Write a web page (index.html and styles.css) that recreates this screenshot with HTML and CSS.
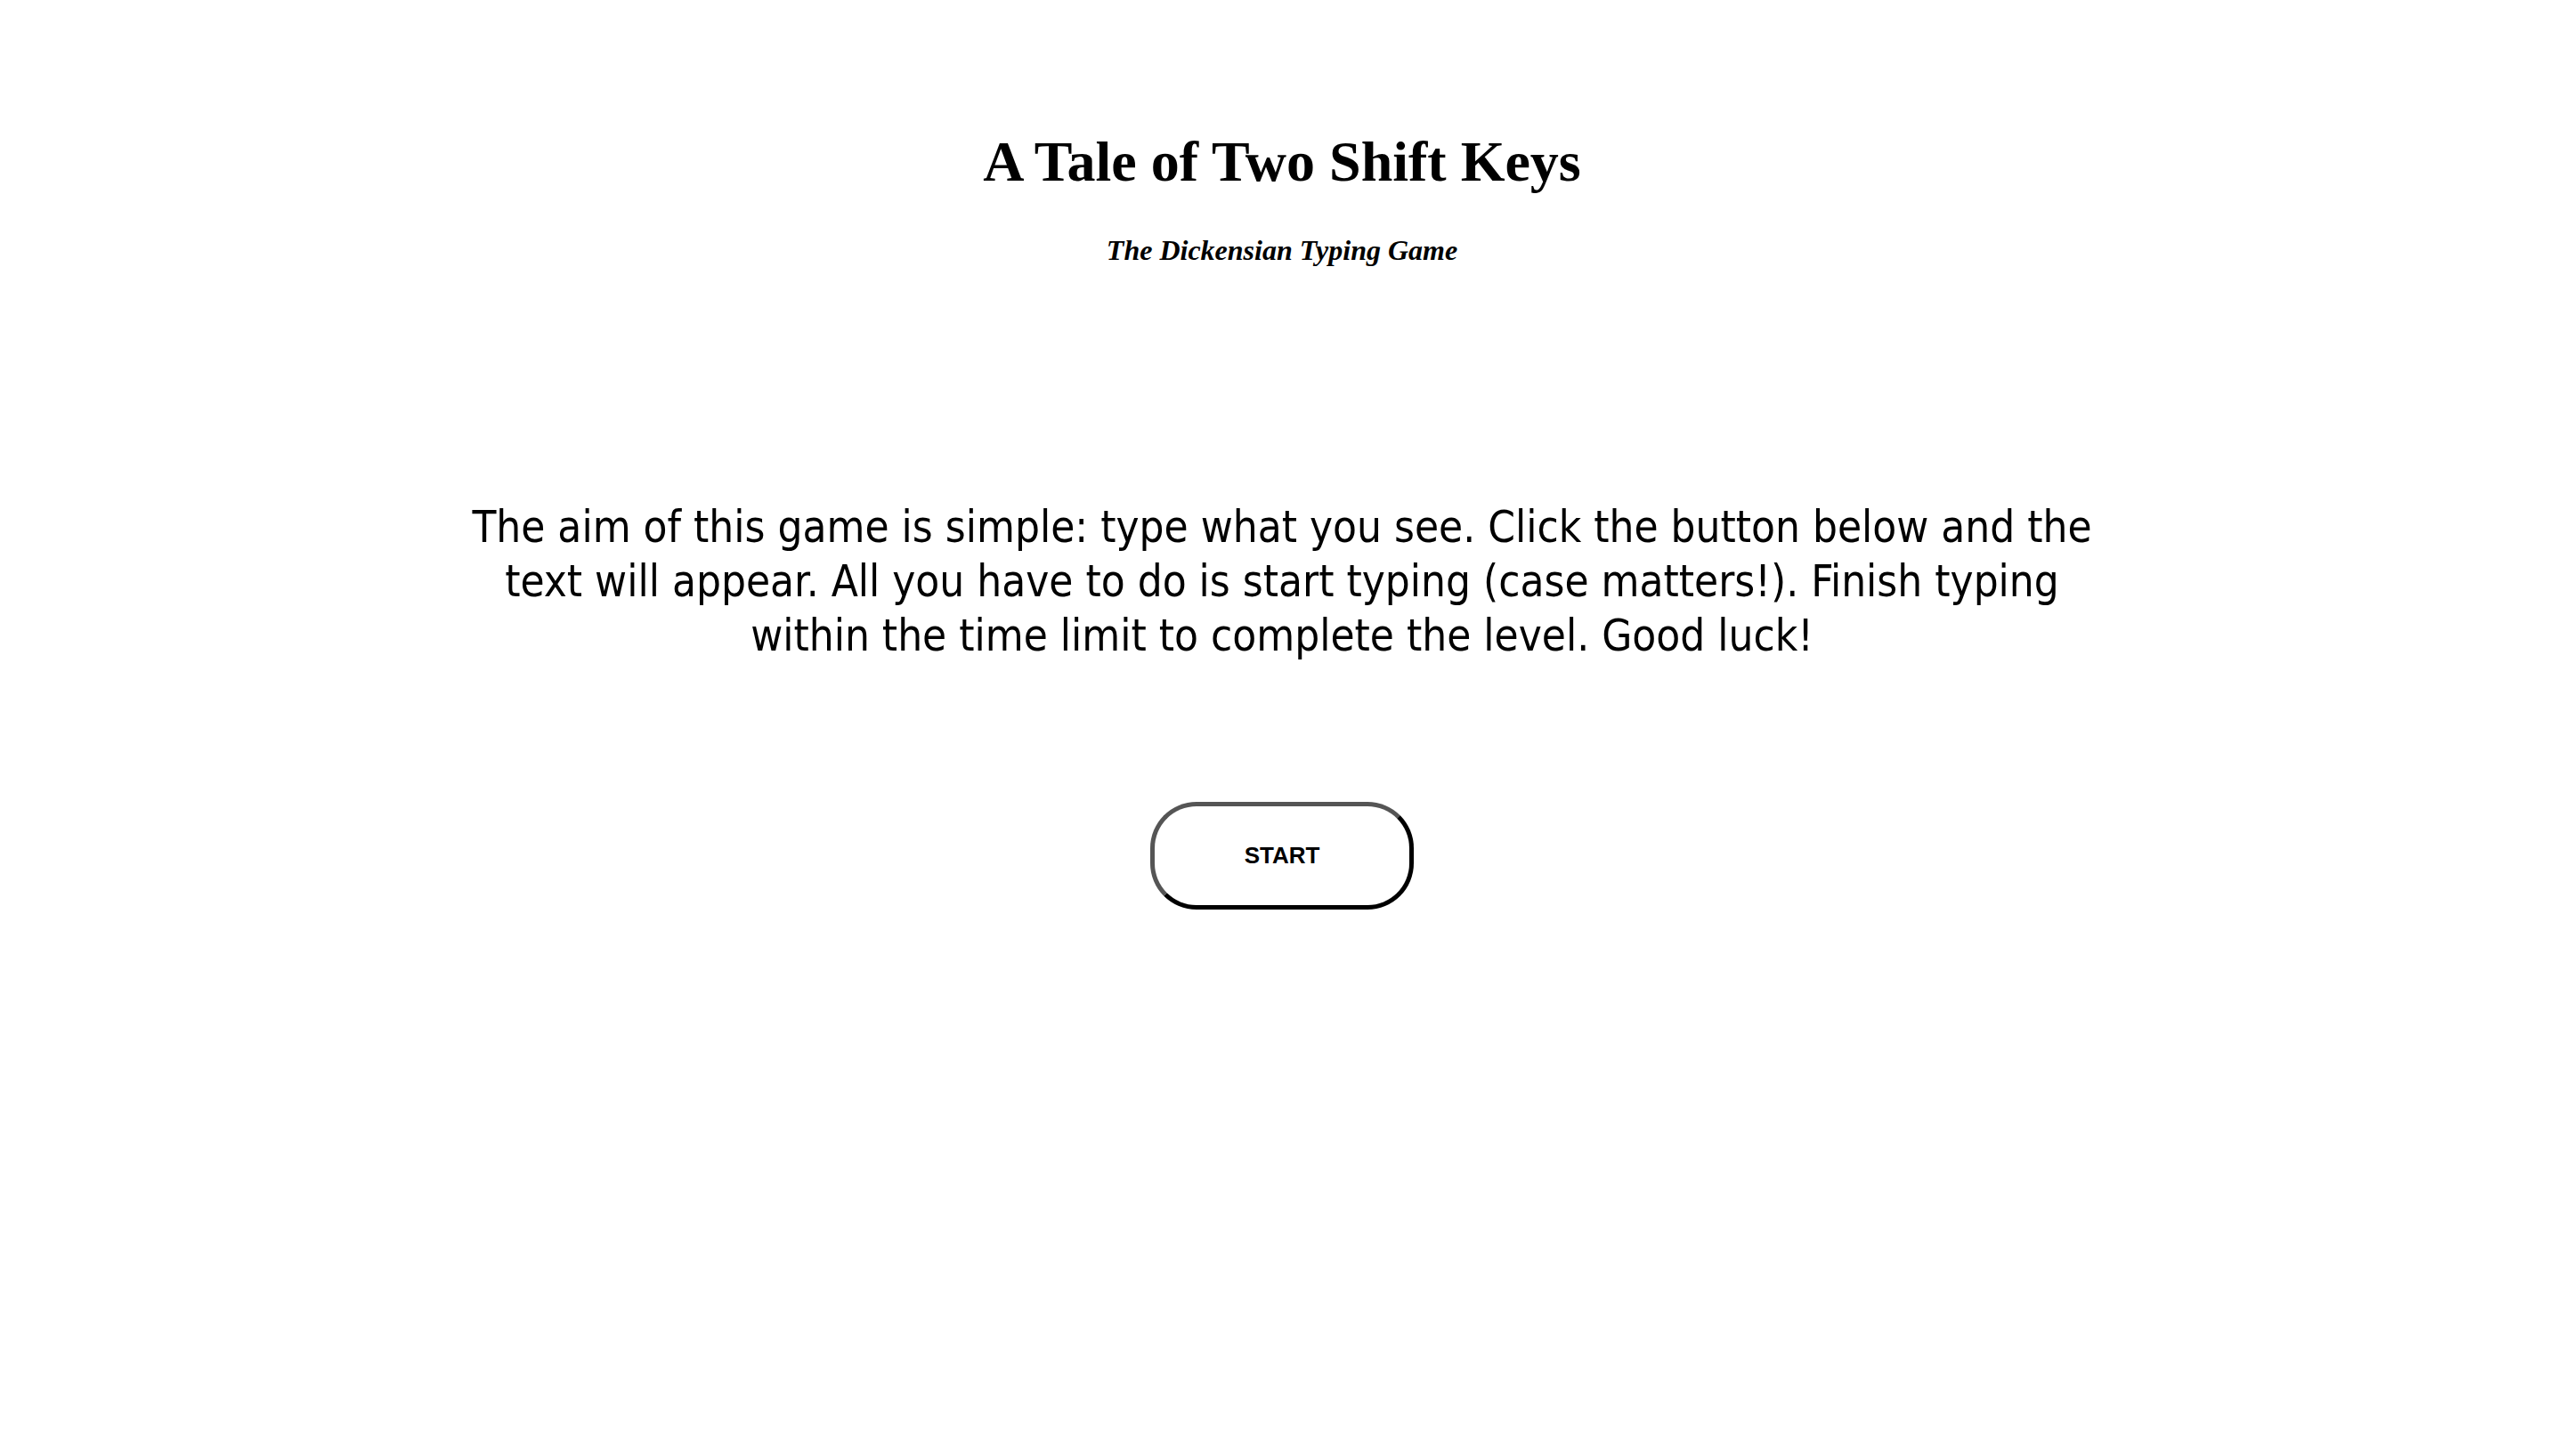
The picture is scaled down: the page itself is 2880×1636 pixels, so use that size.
FILE: index.html
```html
<!DOCTYPE html>
<html lang="en">
<head>
<meta charset="utf-8">
<title>A Tale of Two Shift Keys</title>
<link rel="stylesheet" href="styles.css">
</head>
<body>
<main class="page">
  <header class="masthead">
    <h1 class="title">A Tale of Two Shift Keys</h1>
    <h2 class="subtitle">The Dickensian Typing Game</h2>
  </header>
  <p class="intro">The aim of this game is simple: type what you see. Click the button below and the text will appear. All you have to do is start typing (case matters!). Finish typing within the time limit to complete the level. Good luck!</p>
  <button class="start-btn" type="button">START</button>
</main>
</body>
</html>
```
FILE: styles.css
```css
html, body {
  margin: 0;
  padding: 0;
  background: #ffffff;
  color: #000000;
}

.page {
  display: flex;
  flex-direction: column;
  align-items: center;
  padding-top: 145px;
}

.masthead {
  display: flex;
  flex-direction: column;
  align-items: center;
}

.title {
  margin: 0;
  font-family: "Liberation Serif", "Times New Roman", serif;
  font-weight: bold;
  font-size: 64px;
  line-height: 1.15;
}

.subtitle {
  margin: 44px 0 0;
  font-family: "Liberation Serif", "Times New Roman", serif;
  font-weight: bold;
  font-style: italic;
  font-size: 32px;
  line-height: 1.15;
}

.intro {
  margin: 263px 0 0;
  width: 1850px;
  text-align: center;
  font-family: "DejaVu Sans Condensed", "DejaVu Sans", sans-serif;
  font-stretch: condensed;
  font-size: 49px;
  line-height: 61px;
}

.start-btn {
  margin-top: 156px;
  width: 296px;
  height: 121px;
  box-sizing: border-box;
  background: #ffffff;
  border: 5px solid #000000;
  border-color: #555555 #000000 #000000 #555555;
  border-radius: 52px;
  font-family: "Liberation Sans", Arial, sans-serif;
  font-weight: bold;
  font-size: 26px;
  color: #000000;
  cursor: pointer;
}
```
